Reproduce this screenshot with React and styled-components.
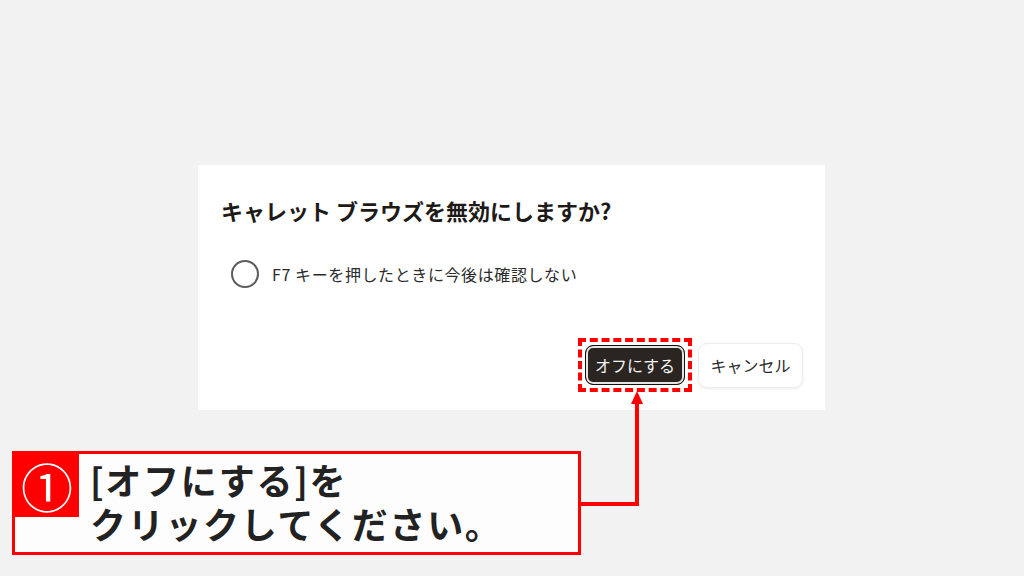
import styled, { createGlobalStyle } from "styled-components";

const GlobalStyle = createGlobalStyle`
  html, body {
    margin: 0;
    padding: 0;
    background: #f2f2f2;
  }
  body {
    font-family: "Noto Sans CJK JP", "Noto Sans", sans-serif;
  }
`;

function App() {
  return (
    <Page>
      <GlobalStyle />
      <Dialog>
        <Title>キャレット ブラウズを無効にしますか?</Title>
        <OptionRow>
          <Radio />
          <OptionLabel>F7 キーを押したときに今後は確認しない</OptionLabel>
        </OptionRow>
        <Actions>
          <Highlight>
            <PrimaryButton>オフにする</PrimaryButton>
          </Highlight>
          <SecondaryButton>キャンセル</SecondaryButton>
        </Actions>
      </Dialog>

      <Callout>
        <StepBadge>①</StepBadge>
        <CalloutText>
          <Line>[オフにする]を</Line>
          <Line>クリックしてください。</Line>
        </CalloutText>
      </Callout>

      <Connector viewBox="0 0 1024 576">
        <path d="M580 504 H637 V400" fill="none" stroke="#ff0000" strokeWidth="4" />
        <polygon points="637,391 631,404 643,404" fill="#ff0000" />
      </Connector>
    </Page>
  );
}

const Page = styled.div`
  position: relative;
  width: 1024px;
  height: 576px;
  overflow: hidden;
  background: #f2f2f2;
  display: flex;
  flex-direction: column;
  padding-top: 165px;
  box-sizing: border-box;
`;

const Dialog = styled.div`
  align-self: flex-start;
  margin-left: 198px;
  width: 627px;
  height: 245px;
  box-sizing: border-box;
  padding: 30px 22px 18px 23px;
  background: #ffffff;
  display: flex;
  flex-direction: column;
`;

const Title = styled.h2`
  margin: 0;
  font-size: 22px;
  line-height: 31px;
  font-weight: 700;
  color: #1e1a18;
`;

const OptionRow = styled.label`
  margin-top: 34px;
  padding-left: 10px;
  display: flex;
  align-items: center;
  gap: 13px;
`;

const Radio = styled.span`
  width: 28px;
  height: 28px;
  box-sizing: border-box;
  border: 2px solid #5c5c5c;
  border-radius: 50%;
  flex-shrink: 0;
`;

const OptionLabel = styled.span`
  font-size: 16px;
  color: #2b2b2b;
  letter-spacing: 0.6px;
`;

const Actions = styled.div`
  margin-top: auto;
  display: flex;
  justify-content: flex-end;
  align-items: center;
  gap: 6px;
`;

const Highlight = styled.span`
  display: inline-flex;
  padding: 3px;
  border: 4px dashed #ff0000;
`;

const PrimaryButton = styled.button`
  width: 100px;
  height: 40px;
  border-radius: 8px;
  border: 1.5px solid #141110;
  box-shadow: inset 0 0 0 2px #e4e4e4;
  background: #2b2522;
  color: #f5f5f5;
  font-family: inherit;
  font-size: 16px;
  padding: 0;
`;

const SecondaryButton = styled.button`
  width: 105px;
  height: 45px;
  border-radius: 9px;
  border: 1px solid #ededed;
  box-shadow: 0 1px 3px rgba(0, 0, 0, 0.08);
  background: #ffffff;
  color: #2b2b2b;
  font-family: inherit;
  font-size: 16px;
  padding: 0;
`;

const Callout = styled.div`
  margin: 41px 0 0 12px;
  width: 569px;
  height: 104px;
  box-sizing: border-box;
  border: 3px solid #ff0000;
  background: #fdfdfd;
  display: flex;
  align-items: flex-start;
`;

const StepBadge = styled.div`
  width: 64px;
  height: 63px;
  background: #ff0000;
  color: #ffffff;
  font-size: 52px;
  line-height: 63px;
  text-align: center;
  flex-shrink: 0;
`;

const CalloutText = styled.div`
  padding: 3px 0 0 11px;
  font-size: 36px;
  font-weight: 700;
  color: #222222;
  letter-spacing: 1.7px;
`;

const Line = styled.div`
  height: 44px;
  line-height: 44px;
  white-space: nowrap;
`;

const Connector = styled.svg`
  position: absolute;
  left: 0;
  top: 0;
  width: 1024px;
  height: 576px;
  pointer-events: none;
`;

export default App;
